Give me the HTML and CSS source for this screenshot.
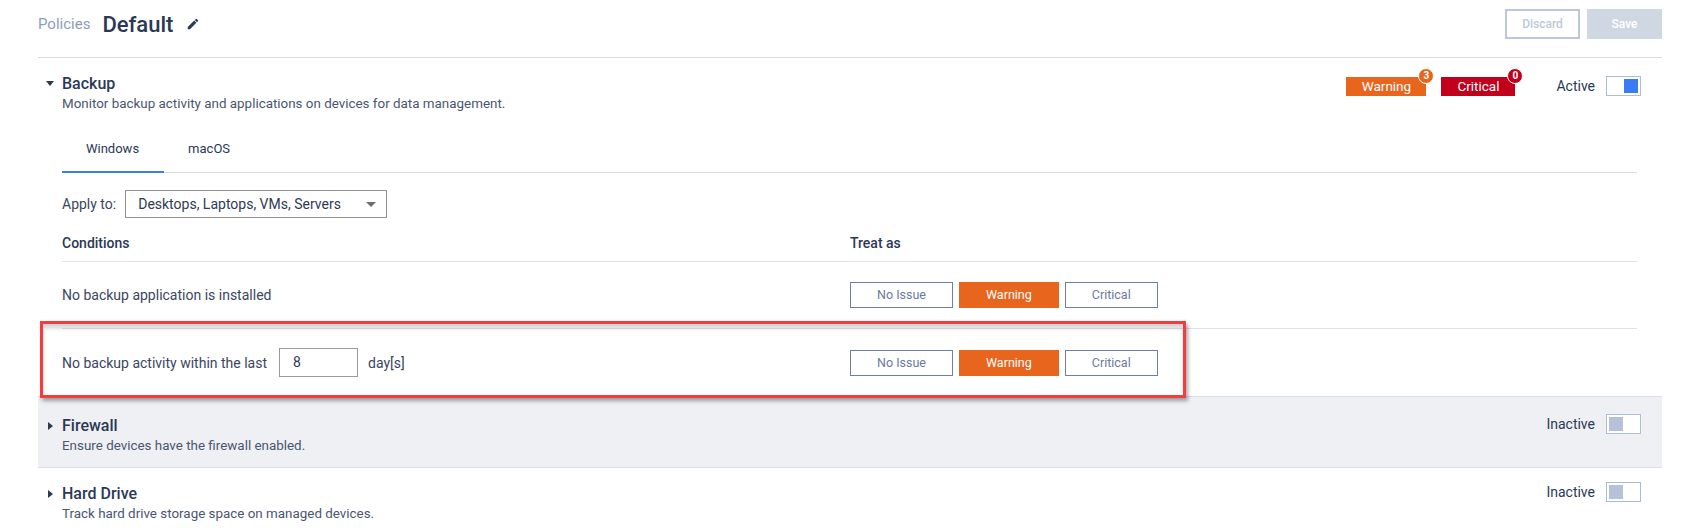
FILE: index.html
```html
<!DOCTYPE html>
<html lang="en">
<head>
    <meta charset="UTF-8">
    <title>Policies - Default</title>
    <link rel="stylesheet" href="styles.css">
</head>
<body>
    <div class="page-head">
        <span class="crumb">Policies</span>
        <span class="policy-name">Default</span>
        <svg class="edit-icon" viewBox="0 0 24 24" width="14" height="14"><path d="M3 17.25V21h3.75L17.81 9.94l-3.75-3.75L3 17.25zM20.71 7.04a1 1 0 0 0 0-1.41l-2.34-2.34a1 1 0 0 0-1.41 0l-1.83 1.83 3.75 3.75 1.83-1.83z"/></svg>
        <div class="head-actions">
            <div class="btn-discard">Discard</div>
            <div class="btn-save">Save</div>
        </div>
    </div>

    <div class="policy open">
        <div class="policy-head">
            <span class="caret down"></span>
            <div class="policy-text">
                <div class="policy-title">Backup</div>
                <div class="policy-desc">Monitor backup activity and applications on devices for data management.</div>
            </div>
            <div class="policy-right">
                <div class="badge warning">Warning<span class="count">3</span></div>
                <div class="badge critical">Critical<span class="count">0</span></div>
                <span class="state">Active</span>
                <div class="toggle on"><span class="knob"></span></div>
            </div>
        </div>

        <div class="policy-body">
            <div class="tabs">
                <div class="tab active">Windows</div>
                <div class="tab">macOS</div>
            </div>

            <div class="apply-row">
                <span>Apply to:</span>
                <div class="select">Desktops, Laptops, VMs, Servers<span class="select-caret"></span></div>
            </div>

            <div class="cond-head">
                <div>Conditions</div>
                <div>Treat as</div>
            </div>
            <div class="cond-row">
                <div class="cond-label">No backup application is installed</div>
                <div class="treat">
                    <div class="opt">No Issue</div>
                    <div class="opt selected">Warning</div>
                    <div class="opt">Critical</div>
                </div>
            </div>
            <div class="cond-row last">
                <div class="cond-label">No backup activity within the last <span class="num-input">8</span> day[s]</div>
                <div class="treat">
                    <div class="opt">No Issue</div>
                    <div class="opt selected">Warning</div>
                    <div class="opt">Critical</div>
                </div>
                <div class="mark"></div>
            </div>
        </div>
    </div>

    <div class="policy closed shaded">
        <div class="policy-head">
            <span class="caret right"></span>
            <div class="policy-text">
                <div class="policy-title">Firewall</div>
                <div class="policy-desc">Ensure devices have the firewall enabled.</div>
            </div>
            <div class="policy-right">
                <span class="state">Inactive</span>
                <div class="toggle"><span class="knob"></span></div>
            </div>
        </div>
    </div>

    <div class="policy closed">
        <div class="policy-head">
            <span class="caret right"></span>
            <div class="policy-text">
                <div class="policy-title">Hard Drive</div>
                <div class="policy-desc">Track hard drive storage space on managed devices.</div>
            </div>
            <div class="policy-right">
                <span class="state">Inactive</span>
                <div class="toggle"><span class="knob"></span></div>
            </div>
        </div>
    </div>
</body>
</html>
```

FILE: styles.css
```css
body {
    margin: 0;
    background-color: #fff;
    color: #3a4660;
    font-family: Roboto, "Liberation Sans", sans-serif;
    font-size: 14px;
}
.page-head {
    display: flex;
    align-items: center;
    margin: 0 24px 0 38px;
    padding: 9px 0 18px;
    border-bottom: 1px solid #d6dce6;
}
.crumb {
    color: #8d9db8;
    font-size: 15px;
    margin-right: 12px;
}
.policy-name {
    color: #2b3856;
    font-size: 22px;
    font-weight: 500;
}
.edit-icon {
    fill: #2b3856;
    margin-left: 13px;
}
.head-actions {
    display: flex;
    gap: 7px;
    margin-left: auto;
}
.btn-discard, .btn-save {
    width: 75px;
    height: 30px;
    box-sizing: border-box;
    line-height: 26px;
    text-align: center;
    font-size: 12px;
    font-weight: 500;
}
.btn-discard {
    border: 2px solid #bcc7da;
    color: #bfc8d9;
}
.btn-save {
    background-color: #cfd7e2;
    color: #fff;
    border: 2px solid #cfd7e2;
}
.policy {
    margin: 0 24px 0 38px;
}
.policy-head {
    display: flex;
    align-items: flex-start;
    padding: 16px 21px 0 8px;
}
.caret {
    width: 0;
    height: 0;
    margin-right: 8px;
}
.caret.down {
    margin-top: 7px;
    border-left: 4px solid transparent;
    border-right: 4px solid transparent;
    border-top: 5px solid #2b3856;
}
.caret.right {
    margin: 6px 9px 0 2px;
    border-top: 4px solid transparent;
    border-bottom: 4px solid transparent;
    border-left: 5px solid #2b3856;
}
.policy-title {
    color: #2b3856;
    font-size: 16px;
    font-weight: 500;
    line-height: 20px;
}
.policy-desc {
    font-size: 13.4px;
    line-height: 18px;
    margin-top: 1px;
    color: #4a5670;
}
.policy-right {
    display: flex;
    align-items: center;
    margin-left: auto;
    margin-top: 1px;
}
.badge {
    position: relative;
    height: 19px;
    line-height: 19px;
    text-align: center;
    color: #fff;
    font-size: 13.5px;
    margin-top: 2px;
}
.badge.warning {
    width: 80px;
    background-color: #e8651e;
    margin-right: 15px;
}
.badge.critical {
    width: 74px;
    background-color: #c2001b;
    margin-right: 41px;
}
.count {
    position: absolute;
    top: -9px;
    right: -8px;
    width: 14px;
    height: 14px;
    border: 1px solid #fff;
    border-radius: 50%;
    font-size: 10px;
    font-weight: 700;
    line-height: 14px;
    text-align: center;
}
.warning .count {
    background-color: #e8651e;
}
.critical .count {
    background-color: #c2001b;
}
.state {
    color: #2b3856;
    font-size: 14px;
    margin-right: 11px;
}
.toggle {
    display: flex;
    width: 35px;
    height: 20px;
    box-sizing: border-box;
    border: 1px solid #aebcd6;
    background-color: #fff;
    padding: 2px;
}
.knob {
    width: 14px;
    height: 14px;
    background-color: #b4c1d9;
}
.toggle.on {
    justify-content: flex-end;
}
.toggle.on .knob {
    background-color: #3b7cf4;
}
.policy-body {
    padding: 0 25px 0 24px;
}
.tabs {
    display: flex;
    margin-top: 14px;
    border-bottom: 1px solid #d6dce6;
}
.tab {
    padding: 13px 25px 13px 24px;
    line-height: 18px;
    color: #2b3856;
    font-size: 13px;
    border-bottom: 2px solid transparent;
    margin-bottom: -1px;
}
.tab.active {
    border-bottom-color: #3b7cf4;
}
.apply-row {
    display: flex;
    align-items: center;
    margin-top: 17px;
}
.select {
    position: relative;
    width: 262px;
    height: 28px;
    box-sizing: border-box;
    border: 1px solid #8f8f8f;
    margin-left: 9px;
    padding-left: 12px;
    line-height: 26px;
    color: #2e3a55;
}
.select-caret {
    position: absolute;
    right: 10px;
    top: 11px;
    border-left: 5px solid transparent;
    border-right: 5px solid transparent;
    border-top: 5px solid #6d6d6d;
}
.cond-head {
    display: grid;
    grid-template-columns: 788px 1fr;
    padding: 16px 0 9px;
    line-height: 18px;
    font-weight: 500;
    color: #2b3856;
    border-bottom: 1px solid #dfe2e8;
}
.cond-row {
    position: relative;
    display: grid;
    grid-template-columns: 788px 1fr;
    align-items: center;
    height: 66px;
    border-bottom: 1px solid #dfe2e8;
}
.cond-row.last {
    border-bottom: none;
    height: 67px;
}
.cond-label {
    display: flex;
    align-items: center;
}
.num-input {
    width: 79px;
    height: 29px;
    box-sizing: border-box;
    border: 1px solid #9a9a9a;
    margin: 0 10px 0 12px;
    padding-left: 13px;
    line-height: 27px;
    color: #2e3a55;
}
.treat {
    display: flex;
    gap: 6px;
}
.opt {
    height: 26px;
    box-sizing: border-box;
    border: 1px solid #6e7fa4;
    padding: 0 26px;
    line-height: 24px;
    text-align: center;
    color: #6b7b9d;
    font-size: 12.5px;
}
.opt.selected {
    background-color: #e8651e;
    border-color: #e8651e;
    color: #fff;
}
.mark {
    position: absolute;
    left: -22px;
    top: -8px;
    width: 1146px;
    height: 77px;
    box-sizing: border-box;
    border: 3px solid #f03d3d;
    box-shadow: 2px 3px 4px rgba(0, 0, 0, 0.35), inset 0 4px 4px rgba(0, 0, 0, 0.18);
    pointer-events: none;
    z-index: 2;
}
.policy.closed .policy-head {
    padding-bottom: 12px;
}
.policy.closed .policy-right {
    margin-top: -2px;
}
.policy.shaded {
    background-color: #eff0f3;
    border-top: 1px solid #d9dcea;
    border-bottom: 1px solid #d9dcea;
}
.policy.shaded .policy-head {
    padding-top: 19px;
}
```
